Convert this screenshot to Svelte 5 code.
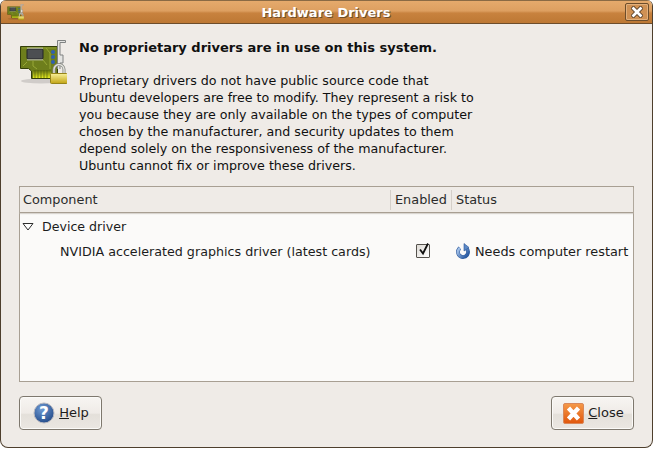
<script lang="ts">
	const paragraph = [
		'Proprietary drivers do not have public source code that',
		'Ubuntu developers are free to modify. They represent a risk to',
		'you because they are only available on the types of computer',
		'chosen by the manufacturer, and security updates to them',
		'depend solely on the responsiveness of the manufacturer.',
		'Ubuntu cannot fix or improve these drivers.'
	];
</script>

{#snippet board(small = false)}
	<svg class={small ? 'tb-icon' : 'main-icon'} viewBox="0 0 48 48">
		<defs>
			<linearGradient id={small ? 'lockS' : 'lockL'} x1="0" y1="0" x2="0" y2="1">
				<stop offset="0" stop-color="#f8f098" />
				<stop offset="1" stop-color="#c2a414" />
			</linearGradient>
			<linearGradient id={small ? 'fingerS' : 'fingerL'} x1="0" y1="0" x2="0" y2="1">
				<stop offset="0" stop-color="#5e6c10" />
				<stop offset="1" stop-color="#e8ee20" />
			</linearGradient>
		</defs>
		<ellipse cx="22" cy="42" rx="20" ry="2.500" fill="#000" opacity=".13" />
		<path d="M1.500 7.500H38.500V39.500H12.500V32L9.500 29.500H1.500Z" fill="#6e7e1c" stroke="#333e0a" />
		<path d="M3 9H37" stroke="#8e9e30" />
		<path d="M4 27L8 23M27 9L31 14V30M24 21L28 26M14 22V27L18 30" fill="none" stroke="#98a836" />
		<path d="M14 31H32V39H14Z" fill="url(#{small ? 'fingerS' : 'fingerL'})" />
		<path d="M16 31V39M19 31V39M22 31V39M25 31V39M28 31V39" stroke="#55620f" stroke-width=".7" />
		<rect x="8" y="10" width="16" height="10" rx="1" fill="#4c4f52" stroke="#222427" />
		<path d="M9 8.500V10M11 8.500V10M13 8.500V10M15 8.500V10M17 8.500V10M19 8.500V10M21 8.500V10M23 8.500V10M9 20V21.500M11 20V21.500M13 20V21.500M15 20V21.500M17 20V21.500M19 20V21.500M21 20V21.500M23 20V21.500" stroke="#e8e8e8" />
		<circle cx="34" cy="13" r="2" fill="#2f5fb0" />
		<circle cx="34" cy="18" r="2" fill="#2f5fb0" />
		<circle cx="34" cy="23" r="2" fill="#2f5fb0" />
		<path d="M38.500 30V1.500H46.500V3.500H41V16H44V24H41V30" fill="#e4e4e2" stroke="#808282" />
		<path d="M35 35V30.500A5 5 0 0 1 45 30.500V35" fill="none" stroke="#85877f" stroke-width="3" />
		<path d="M35 35V30.500A5 5 0 0 1 45 30.500V35" fill="none" stroke="#e2e2de" stroke-width="1.400" />
		<rect x="31.500" y="34.500" width="17" height="10" rx="1" fill="url(#{small ? 'lockS' : 'lockL'})" stroke="#96841a" />
	</svg>
{/snippet}

<div class="window">
	<header class="titlebar">
		<div class="tb-side">{@render board(true)}</div>
		<span class="title">Hardware Drivers</span>
		<button class="tb-close" aria-label="Close">
			<svg viewBox="0 0 12 12" width="12" height="12">
				<path d="M2.500 2.500L9.500 9.500M9.500 2.500L2.500 9.500" stroke="#4a3520" stroke-width="4.400" stroke-linecap="square" />
				<path d="M2.500 2.500L9.500 9.500M9.500 2.500L2.500 9.500" stroke="#fff" stroke-width="2.800" stroke-linecap="square" />
			</svg>
		</button>
	</header>

	<main class="content">
		<section class="info">
			{@render board()}
			<div class="message">
				<h1>No proprietary drivers are in use on this system.</h1>
				<p>
					{#each paragraph as line}
						<span>{line}</span>
					{/each}
				</p>
			</div>
		</section>

		<section class="table">
			<div class="thead">
				<div class="th col-component">Component</div>
				<div class="th col-enabled">Enabled</div>
				<div class="th col-status">Status</div>
			</div>
			<div class="group">
				<svg class="expander" viewBox="0 0 12 10" width="12" height="10">
					<path d="M1 1.500H11L6 8Z" fill="#fff" stroke="#2e2e2e" />
				</svg>
				<span>Device driver</span>
			</div>
			<div class="row">
				<div class="col-component name">NVIDIA accelerated graphics driver (latest cards)</div>
				<div class="col-enabled check-cell">
					<span class="check">
						<svg viewBox="0 0 14 14" width="14" height="14">
							<path d="M3 6.500L6 10.500L11 0.500" fill="none" stroke="#111" stroke-width="1.800" />
						</svg>
					</span>
				</div>
				<div class="col-status status">
					<svg viewBox="0 0 16 16" width="16" height="16">
						<defs>
							<linearGradient id="refresh" x1="0" y1="0" x2="0" y2="1">
								<stop offset="0" stop-color="#a2c0e8" />
								<stop offset="1" stop-color="#2f5fa6" />
							</linearGradient>
						</defs>
						<circle cx="8" cy="9" r="5" fill="none" stroke="#2a5699" stroke-width="3.800" stroke-dasharray="24 7.400" transform="rotate(-50 8 9)" />
						<circle cx="8" cy="9" r="5" fill="none" stroke="url(#refresh)" stroke-width="2.800" stroke-dasharray="24 7.400" transform="rotate(-50 8 9)" />
						<path d="M9 0.500L14 4.500L9 8Z" fill="#5c88c6" stroke="#2a5699" stroke-width=".6" />
					</svg>
					<span>Needs computer restart</span>
				</div>
			</div>
		</section>

		<footer class="buttons">
			<button class="btn">
				<svg viewBox="0 0 24 24" width="24" height="24">
					<defs>
						<radialGradient id="help" cx=".4" cy=".3" r=".8">
							<stop offset="0" stop-color="#6f9bd4" />
							<stop offset="1" stop-color="#1c4382" />
						</radialGradient>
					</defs>
					<circle cx="12" cy="12" r="10" fill="url(#help)" stroke="#b9b9c0" />
					<text x="12" y="18" class="qmark">?</text>
				</svg>
				<span class="label"><u>H</u>elp</span>
			</button>
			<button class="btn">
				<svg viewBox="0 0 24 24" width="24" height="24">
					<defs>
						<linearGradient id="close" x1="0" y1="0" x2="0" y2="1">
							<stop offset="0" stop-color="#f59a4a" />
							<stop offset="1" stop-color="#e0560c" />
						</linearGradient>
					</defs>
					<rect x="2.500" y="2.500" width="20" height="20" rx="1.500" fill="url(#close)" stroke="#d9885a" />
					<path d="M7.500 7L17.500 18M17.500 7L7.500 18" stroke="#fff" stroke-width="4.400" />
				</svg>
				<span class="label"><u>C</u>lose</span>
			</button>
		</footer>
	</main>
</div>

<style>
	:global(body) {
		margin: 0;
		background: #fff;
	}

	.window {
		box-sizing: border-box;
		width: 653px;
		height: 448px;
		display: flex;
		flex-direction: column;
		background: #efebe7;
		border: 1px solid #4e3f2d;
		border-top: none;
		border-radius: 6px 6px 8px 8px;
		overflow: hidden;
		font-family: 'DejaVu Sans', sans-serif;
		font-size: 13px;
		color: #101010;
	}

	.titlebar {
		flex: none;
		height: 24px;
		box-sizing: border-box;
		display: flex;
		align-items: center;
		padding: 0 3px 0 6px;
		background: linear-gradient(#e5aa6c 0%, #dd9f60 45%, #c8823e 55%, #bd7834 100%);
		border-top: 1px solid #8a6a44;
		border-bottom: 1px solid #6d4d2b;
	}

	.tb-side {
		width: 24px;
		display: flex;
	}

	.tb-icon {
		width: 17px;
		height: 17px;
	}

	.title {
		flex: 1;
		text-align: center;
		font-weight: 700;
		font-size: 13px;
		color: #fff;
		text-shadow: 1px 1px 0 #6d4d2b;
		padding-right: 4px;
	}

	.tb-close {
		width: 24px;
		height: 18px;
		padding: 0;
		display: flex;
		align-items: center;
		justify-content: center;
		background: #cf9154;
		border: 1px solid #6d4d2b;
		border-radius: 2px;
		box-shadow: inset 0 0 0 1px #e2b07c;
	}

	.content {
		flex: 1;
		display: flex;
		flex-direction: column;
		padding: 0 18px 17px;
		min-height: 0;
	}

	.info {
		flex: none;
		height: 162px;
		display: flex;
		gap: 12px;
		padding-top: 15px;
		box-sizing: border-box;
	}

	.main-icon {
		width: 48px;
		height: 48px;
		flex: none;
	}

	h1 {
		margin: 0;
		font-size: 13px;
		line-height: 17px;
		font-weight: 700;
	}

	p {
		margin: 16px 0 0;
		line-height: 17px;
		font-size: 12.65px;
	}

	p span {
		display: block;
		white-space: nowrap;
	}

	.table {
		flex: 1;
		min-height: 0;
		background: #fbfaf9;
		border: 1px solid #a89f93;
	}

	.thead {
		height: 26px;
		display: flex;
		align-items: center;
		background: #efebe7;
		border-bottom: 1px solid #a89f93;
		box-shadow: 0 1px 1px #d9d5d0;
		box-sizing: border-box;
		color: #2b2b2b;
		font-size: 12.85px;
	}

	.th {
		height: 20px;
		line-height: 20px;
		box-sizing: border-box;
	}

	.th + .th {
		border-left: 1px solid #d4cfc9;
	}

	.col-component {
		width: 370px;
		padding-left: 3px;
		box-sizing: border-box;
	}

	.col-enabled {
		width: 61px;
		padding-left: 4px;
		box-sizing: border-box;
	}

	.col-status {
		flex: 1;
		padding-left: 4px;
		box-sizing: border-box;
	}

	.group {
		height: 26px;
		display: flex;
		align-items: center;
		gap: 8px;
		padding: 1px 0 0 2px;
		box-sizing: border-box;
		color: #1c1c1c;
		font-size: 12.6px;
	}

	.row {
		height: 24px;
		display: flex;
		align-items: center;
		color: #1c1c1c;
		font-size: 12.7px;
	}

	.name {
		padding-left: 40px;
		white-space: nowrap;
	}

	.check-cell {
		display: flex;
		justify-content: center;
		padding: 0 0 0 5px;
	}

	.check {
		width: 12px;
		height: 12px;
		border: 1px solid #55524d;
		border-radius: 1px;
		background: linear-gradient(135deg, #dedbd6, #fff);
		display: block;
		position: relative;
	}

	.check svg {
		position: absolute;
		top: -2px;
		left: 0;
	}

	.status {
		display: flex;
		align-items: center;
		gap: 4px;
		padding-left: 4px;
		white-space: nowrap;
		font-size: 12.85px;
	}

	.buttons {
		flex: none;
		display: flex;
		justify-content: space-between;
		padding-top: 14px;
	}

	.btn {
		width: 83px;
		height: 34px;
		padding: 0;
		display: flex;
		align-items: center;
		justify-content: center;
		gap: 3px;
		font: inherit;
		color: #1c1c1c;
		background: linear-gradient(#f7f5f2 0%, #efebe7 50%, #e4e0da 55%, #ebe7e2 100%);
		border: 1px solid #7e786e;
		border-radius: 4px;
		box-shadow: inset 0 0 0 1px #fbfaf8;
	}

	.label {
		margin-top: -2px;
	}

	.qmark {
		font-family: 'DejaVu Sans', sans-serif;
		font-weight: 700;
		font-size: 17px;
		fill: #fff;
		text-anchor: middle;
	}
</style>
